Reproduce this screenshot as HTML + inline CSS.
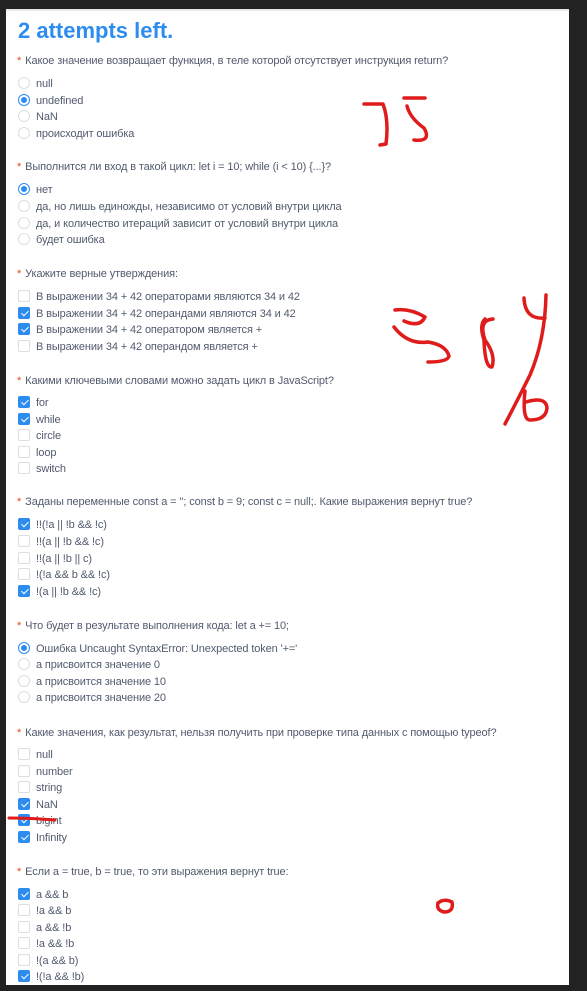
<!DOCTYPE html>
<html><head><meta charset="utf-8"><style>
body{margin:0;width:587px;height:991px;background:#222;overflow:hidden;font-family:"Liberation Sans","DejaVu Sans",sans-serif;}
#p{position:absolute;left:6px;top:9px;width:563px;height:976px;background:#fff;border-top:2px solid #e8e8e8;box-sizing:border-box;overflow:hidden}
.t{position:absolute;left:12px;top:7px;font-size:22px;font-weight:bold;color:#2d8cf0;}
.q,.o{position:absolute;font-size:11px;color:#515a6e;white-space:nowrap;line-height:14px;letter-spacing:-0.12px}
.q{left:11px}
.q b{color:#ed4014;font-weight:normal;margin-right:4px}
.o{left:30px}
.r,.c{position:absolute;left:-18px;top:0;width:12px;height:12px;box-sizing:border-box;border:1px solid #dcdee2;background:#fff}
.r{border-radius:50%}
.r.on{border-color:#2d8cf0}
.r.on:after{content:"";position:absolute;left:2px;top:2px;width:6px;height:6px;border-radius:50%;background:#2d8cf0}
.c{border-radius:2px}
.c.on{background:#2d8cf0;border-color:#2d8cf0}
.c.on:after{content:"";position:absolute;left:3.5px;top:1px;width:3px;height:6px;border:solid #fff;border-width:0 1.5px 1.5px 0;transform:rotate(45deg)}
svg{position:absolute;left:0;top:0}
</style></head><body><div id="p">
<div class="t">2 attempts left.</div>
<div class="q" style="top:43px"><b>*</b>Какое значение возвращает функция, в теле которой отсутствует инструкция return?</div>
<div class="o" style="top:66px"><i class="r"></i>null</div>
<div class="o" style="top:83px"><i class="r on"></i>undefined</div>
<div class="o" style="top:99px"><i class="r"></i>NaN</div>
<div class="o" style="top:116px"><i class="r"></i>происходит ошибка</div>

<div class="q" style="top:149px"><b>*</b>Выполнится ли вход в такой цикл: let i = 10; while (i &lt; 10) {...}?</div>
<div class="o" style="top:172px"><i class="r on"></i>нет</div>
<div class="o" style="top:189px"><i class="r"></i>да, но лишь единожды, независимо от условий внутри цикла</div>
<div class="o" style="top:206px"><i class="r"></i>да, и количество итераций зависит от условий внутри цикла</div>
<div class="o" style="top:222px"><i class="r"></i>будет ошибка</div>

<div class="q" style="top:256px"><b>*</b>Укажите верные утверждения:</div>
<div class="o" style="top:279px"><i class="c"></i>В выражении 34 + 42 операторами являются 34 и 42</div>
<div class="o" style="top:296px"><i class="c on"></i>В выражении 34 + 42 операндами являются 34 и 42</div>
<div class="o" style="top:312px"><i class="c on"></i>В выражении 34 + 42 оператором является +</div>
<div class="o" style="top:329px"><i class="c"></i>В выражении 34 + 42 операндом является +</div>

<div class="q" style="top:363px"><b>*</b>Какими ключевыми словами можно задать цикл в JavaScript?</div>
<div class="o" style="top:385px"><i class="c on"></i>for</div>
<div class="o" style="top:402px"><i class="c on"></i>while</div>
<div class="o" style="top:418px"><i class="c"></i>circle</div>
<div class="o" style="top:435px"><i class="c"></i>loop</div>
<div class="o" style="top:451px"><i class="c"></i>switch</div>

<div class="q" style="top:484px"><b>*</b>Заданы переменные const a = ''; const b = 9; const c = null;. Какие выражения вернут true?</div>
<div class="o" style="top:507px"><i class="c on"></i>!!(!a || !b &amp;&amp; !c)</div>
<div class="o" style="top:524px"><i class="c"></i>!!(a || !b &amp;&amp; !c)</div>
<div class="o" style="top:541px"><i class="c"></i>!!(a || !b || c)</div>
<div class="o" style="top:557px"><i class="c"></i>!(!a &amp;&amp; b &amp;&amp; !c)</div>
<div class="o" style="top:574px"><i class="c on"></i>!(a || !b &amp;&amp; !c)</div>

<div class="q" style="top:608px"><b>*</b>Что будет в результате выполнения кода: let a += 10;</div>
<div class="o" style="top:631px"><i class="r on"></i>Ошибка Uncaught SyntaxError: Unexpected token '+='</div>
<div class="o" style="top:647px"><i class="r"></i>а присвоится значение 0</div>
<div class="o" style="top:664px"><i class="r"></i>а присвоится значение 10</div>
<div class="o" style="top:680px"><i class="r"></i>а присвоится значение 20</div>

<div class="q" style="top:715px"><b>*</b>Какие значения, как результат, нельзя получить при проверке типа данных с помощью typeof?</div>
<div class="o" style="top:737px"><i class="c"></i>null</div>
<div class="o" style="top:754px"><i class="c"></i>number</div>
<div class="o" style="top:770px"><i class="c"></i>string</div>
<div class="o" style="top:787px"><i class="c on"></i>NaN</div>
<div class="o" style="top:803px"><i class="c on"></i>bigint</div>
<div class="o" style="top:820px"><i class="c on"></i>Infinity</div>

<div class="q" style="top:854px"><b>*</b>Если a = true, b = true, то эти выражения вернут true:</div>
<div class="o" style="top:877px"><i class="c on"></i>a &amp;&amp; b</div>
<div class="o" style="top:893px"><i class="c"></i>!a &amp;&amp; b</div>
<div class="o" style="top:910px"><i class="c"></i>a &amp;&amp; !b</div>
<div class="o" style="top:926px"><i class="c"></i>!a &amp;&amp; !b</div>
<div class="o" style="top:943px"><i class="c"></i>!(a &amp;&amp; b)</div>
<div class="o" style="top:959px"><i class="c on"></i>!(!a &amp;&amp; !b)</div>
</div>
<svg width="587" height="991" fill="none" stroke="#e01b1b" stroke-width="3.5" stroke-linecap="round" stroke-linejoin="round">
<path d="M364 104 L383 104 Q389 120 386 144 L380 145"/>
<path d="M404 98 L425 98 M407 106 Q410 118 424 128 Q432 142 414 140"/>
<path d="M395 310 Q410 308 425 317 Q420 328 404 321 M394 327 Q408 345 428 342 Q446 345 449 356 Q448 362 428 362"/>
<path d="M485 319 Q479 325 484 340 Q485 368 492 367 Q496 355 485 340 Q478 320 493 319"/>
<path d="M524 298 Q525 320 545 318 M546 295 Q545 340 530 375 Q515 405 505 424"/>
<path d="M525 391 Q522 420 530 420 Q546 420 547 408 Q546 396 526 402"/>
<path d="M438 903 Q444 898 452 902 Q454 912 444 912 Q436 910 438 903"/>
<path d="M9 818 Q30 818 55 820" stroke-width="3"/>
</svg>
</body></html>
